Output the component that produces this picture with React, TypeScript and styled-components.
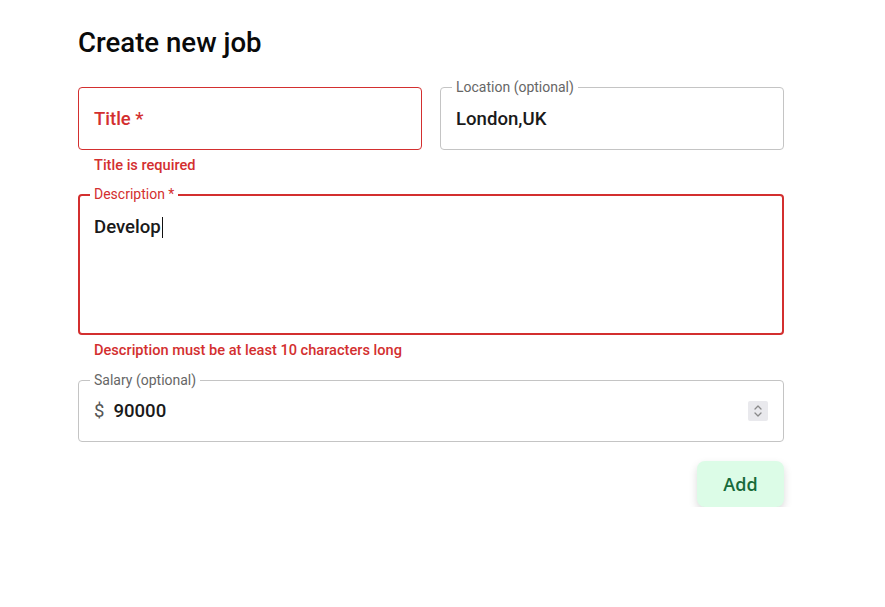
import React from "react";
import styled, { createGlobalStyle } from "styled-components";

const Global = createGlobalStyle`
  html, body { margin: 0; padding: 0; background: #fff; }
  body { font-family: Roboto, "Liberation Sans", sans-serif; color: #1f1f1f; }
`;

const Page = styled.div`
  width: 706px;
  margin-left: 78px;
  padding-top: 26px;
  display: flex;
  flex-direction: column;
`;

const Heading = styled.h1`
  margin: 0;
  font-size: 27.6px;
  line-height: 34px;
  font-weight: 500;
  color: #0a0a0a;
`;

const Row = styled.div`
  margin-top: 27px;
  display: grid;
  grid-template-columns: 1fr 1fr;
  column-gap: 18px;
  align-items: start;
`;

const Column = styled.div`
  display: flex;
  flex-direction: column;
`;

const Field = styled.div<{ $error?: boolean; $focused?: boolean; $height: number; $align?: string }>`
  position: relative;
  box-sizing: border-box;
  height: ${(p) => p.$height}px;
  border: ${(p) => (p.$focused ? 2 : 1)}px solid
    ${(p) => (p.$error ? "#d32f2f" : "#c4c4c4")};
  border-radius: 4px;
  padding: 0 ${(p) => (p.$focused ? 14 : 15)}px;
  display: flex;
  align-items: ${(p) => p.$align || "center"};
  gap: 9px;
`;

const FloatLabel = styled.span<{ $error?: boolean; $focused?: boolean }>`
  position: absolute;
  top: ${(p) => (p.$focused ? -10 : -9)}px;
  left: ${(p) => (p.$focused ? 10 : 11)}px;
  padding: 0 4px;
  background: #fff;
  font-size: 14px;
  line-height: 16px;
  color: ${(p) => (p.$error ? "#d32f2f" : "#666")};
`;

const Placeholder = styled.span`
  font-size: 18.5px;
  font-weight: 500;
  color: #d32f2f;
`;

const Value = styled.span`
  font-size: 18.6px;
  font-weight: 500;
  color: #1a1a1a;
  display: inline-flex;
  align-items: center;
`;

const MultiValue = styled(Value)`
  margin-top: 20px;
`;

const Caret = styled.span`
  display: inline-block;
  width: 1px;
  height: 21px;
  background: #111;
  margin-left: 1px;
`;

const Adornment = styled.span`
  font-size: 18.5px;
  color: #555;
`;

const Spacer = styled.span`
  flex: 1;
`;

const Spinner = styled.span`
  width: 20px;
  height: 20px;
  background: #e9e9ed;
  border-radius: 2px;
  display: flex;
  align-items: center;
  justify-content: center;
`;

const Helper = styled.div`
  margin-top: 5px;
  padding-left: 16px;
  font-size: 14.6px;
  line-height: 20px;
  font-weight: 500;
  color: #d32f2f;
`;

const Block = styled.div<{ $mt: number }>`
  margin-top: ${(p) => p.$mt}px;
  display: flex;
  flex-direction: column;
`;

const Actions = styled.div`
  margin-top: 19px;
  display: flex;
  justify-content: flex-end;
`;

const AddButton = styled.button`
  width: 87px;
  height: 46px;
  border: none;
  border-radius: 8px;
  background: #dcfce7;
  color: #176b3a;
  font-family: "Open Sans", "Noto Sans", sans-serif;
  font-size: 18px;
  font-weight: 600;
  box-shadow: 0 4px 8px rgba(0, 0, 0, 0.15);
  cursor: pointer;
`;

export default function App() {
  return (
    <>
      <Global />
      <Page>
        <Heading>Create new job</Heading>
        <Row>
          <Column>
            <Field $error $height={63}>
              <Placeholder>Title *</Placeholder>
            </Field>
            <Helper>Title is required</Helper>
          </Column>
          <Field $height={63}>
            <FloatLabel>Location (optional)</FloatLabel>
            <Value>London,UK</Value>
          </Field>
        </Row>
        <Block $mt={19}>
          <Field $error $focused $height={141} $align="flex-start">
            <FloatLabel $error $focused>Description *</FloatLabel>
            <MultiValue>
              Develop
              <Caret />
            </MultiValue>
          </Field>
          <Helper>Description must be at least 10 characters long</Helper>
        </Block>
        <Block $mt={20}>
          <Field $height={62}>
            <FloatLabel>Salary (optional)</FloatLabel>
            <Adornment>$</Adornment>
            <Value>90000</Value>
            <Spacer />
            <Spinner>
              <svg width="10" height="14" viewBox="0 0 10 14" fill="none" stroke="#8a8a8a" strokeWidth="1.3" strokeLinecap="round" strokeLinejoin="round">
                <path d="M2 5 L5 2 L8 5" />
                <path d="M2 9 L5 12 L8 9" />
              </svg>
            </Spinner>
          </Field>
        </Block>
        <Actions>
          <AddButton>Add</AddButton>
        </Actions>
      </Page>
    </>
  );
}
